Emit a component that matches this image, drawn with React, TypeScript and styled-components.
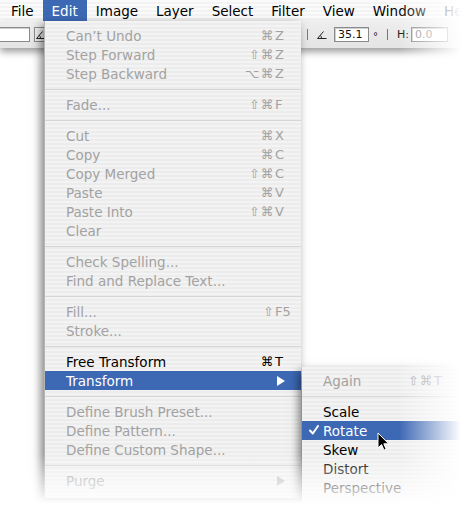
import styled, { createGlobalStyle } from "styled-components";

const GlobalStyle = createGlobalStyle`
  html, body {
    margin: 0;
    padding: 0;
    background: #fff;
  }
  body {
    font-family: "DejaVu Sans", "Liberation Sans", sans-serif;
  }
`;

type MenuItem =
  | "sep"
  | {
      label: string;
      mods?: string;
      keyName?: string;
      enabled?: boolean;
      submenu?: boolean;
      active?: boolean;
      checked?: boolean;
    };

const menuBarItems = ["File", "Edit", "Image", "Layer", "Select", "Filter", "View", "Window", "Help"];

const editItems: MenuItem[] = [
  { label: "Can’t Undo", mods: "⌘", keyName: "Z" },
  { label: "Step Forward", mods: "⇧⌘", keyName: "Z" },
  { label: "Step Backward", mods: "⌥⌘", keyName: "Z" },
  "sep",
  { label: "Fade...", mods: "⇧⌘", keyName: "F" },
  "sep",
  { label: "Cut", mods: "⌘", keyName: "X" },
  { label: "Copy", mods: "⌘", keyName: "C" },
  { label: "Copy Merged", mods: "⇧⌘", keyName: "C" },
  { label: "Paste", mods: "⌘", keyName: "V" },
  { label: "Paste Into", mods: "⇧⌘", keyName: "V" },
  { label: "Clear" },
  "sep",
  { label: "Check Spelling..." },
  { label: "Find and Replace Text..." },
  "sep",
  { label: "Fill...", mods: "⇧", keyName: "F5" },
  { label: "Stroke..." },
  "sep",
  { label: "Free Transform", mods: "⌘", keyName: "T", enabled: true },
  { label: "Transform", enabled: true, submenu: true, active: true },
  "sep",
  { label: "Define Brush Preset..." },
  { label: "Define Pattern..." },
  { label: "Define Custom Shape..." },
  "sep",
  { label: "Purge", submenu: true },
];

const transformItems: MenuItem[] = [
  { label: "Again", mods: "⇧⌘", keyName: "T" },
  "sep",
  { label: "Scale", enabled: true },
  { label: "Rotate", enabled: true, active: true, checked: true },
  { label: "Skew", enabled: true },
  { label: "Distort", enabled: true },
  { label: "Perspective", enabled: true },
];

const AngleIcon = () => (
  <svg width="10" height="8" viewBox="0 0 10 8">
    <path d="M0.5 7.5 H9.5 M0.5 7.5 L6.5 0.5 M4.5 7.5 A4 4 0 0 0 3.3 4.3" stroke="#222" strokeWidth="1" fill="none" />
  </svg>
);

const CheckIcon = () => (
  <svg width="10" height="10" viewBox="0 0 10 10">
    <path d="M1 5.5 L3.8 8.5 L9 1" stroke="#fff" strokeWidth="2" fill="none" strokeLinecap="round" strokeLinejoin="round" />
  </svg>
);

const Pointer = () => (
  <svg width="13" height="20" viewBox="0 0 13 20">
    <path d="M1 1 L1 16 L4.6 12.6 L7 18.2 L9.2 17.2 L6.8 11.8 L11.6 11.8 Z" fill="#000" stroke="#fff" strokeWidth="1" strokeLinejoin="round" />
  </svg>
);

const renderItems = (items: MenuItem[]) =>
  items.map((item, idx) =>
    item === "sep" ? (
      <Separator key={idx} />
    ) : (
      <Row key={idx} $enabled={!!item.enabled} $active={!!item.active}>
        {item.checked && (
          <Check>
            <CheckIcon />
          </Check>
        )}
        <Label>{item.label}</Label>
        {item.mods && <Mods>{item.mods}</Mods>}
        {item.keyName && <KeyName>{item.keyName}</KeyName>}
        {item.submenu && <Arrow $active={!!item.active} />}
      </Row>
    )
  );

const App = () => {
  return (
    <Screen>
      <GlobalStyle />
      <MenuBar>
        {menuBarItems.map((name) => (
          <BarItem key={name} $open={name === "Edit"}>
            {name}
          </BarItem>
        ))}
      </MenuBar>
      <Toolbar>
        <LeftGroup>
          <Field $width={38} $offset={-8} />
          <ToolButton>
            <AngleIcon />
          </ToolButton>
        </LeftGroup>
        <RightGroup>
          <Divider />
          <AngleIcon />
          <Field $width={35}>35.1</Field>
          <Degree>°</Degree>
          <Divider />
          <FieldLabel>H:</FieldLabel>
          <Field $width={37} $muted>
            0.0
          </Field>
        </RightGroup>
      </Toolbar>

      <EditMenu>{renderItems(editItems)}</EditMenu>
      <SubMenu>{renderItems(transformItems)}</SubMenu>
      <Cursor>
        <Pointer />
      </Cursor>

      <RightFade />
      <BottomFade />
    </Screen>
  );
};

export default App;

const Screen = styled.div`
  position: relative;
  width: 471px;
  height: 516px;
  overflow: hidden;
  background: #fff;
`;

const MenuBar = styled.div`
  display: flex;
  align-items: stretch;
  height: 21px;
  padding-left: 2px;
  background: repeating-linear-gradient(to bottom, #fbfbfb 0, #fbfbfb 2px, #f3f3f3 2px, #f3f3f3 4px);
`;

const BarItem = styled.div<{ $open: boolean }>`
  display: flex;
  align-items: center;
  padding: 0 9px 0 9px;
  font-size: 13.5px;
  color: ${({ $open }) => ($open ? "#fff" : "#000")};
  background: ${({ $open }) => ($open ? "#3d68b4" : "transparent")};
`;

const Toolbar = styled.div`
  display: flex;
  align-items: center;
  height: 27px;
  background: linear-gradient(to bottom, #eeeeee, #e4e4e4);
  box-shadow: 0 4px 7px rgba(0, 0, 0, 0.38);
  font-size: 11px;
  color: #222;
`;

const LeftGroup = styled.div`
  display: flex;
  align-items: center;
  gap: 4px;
`;

const RightGroup = styled.div`
  display: flex;
  align-items: center;
  gap: 7px;
  margin-left: 258px;
`;

const Field = styled.div<{ $width: number; $offset?: number; $muted?: boolean }>`
  box-sizing: border-box;
  width: ${({ $width }) => $width}px;
  height: 15px;
  margin-left: ${({ $offset }) => $offset ?? 0}px;
  padding: 0 3px;
  line-height: 13px;
  background: #fff;
  border: 1px solid #8a8a8a;
  box-shadow: inset 1px 1px 0 #cfcfcf;
  color: ${({ $muted }) => ($muted ? "#8a8a8a" : "#111")};
`;

const ToolButton = styled.div`
  box-sizing: border-box;
  display: flex;
  align-items: center;
  justify-content: center;
  width: 13px;
  height: 15px;
  border: 1px solid #8a8a8a;
  background: #f2f2f2;
`;

const Divider = styled.div`
  width: 1px;
  height: 11px;
  background: #777;
  margin: 0 2px;
`;

const Degree = styled.span`
  margin-left: -3px;
  font-size: 10px;
  line-height: 10px;
  align-self: flex-start;
  margin-top: 5px;
`;

const FieldLabel = styled.span`
  margin-right: -5px;
`;

const menuSurface = `
  position: absolute;
  display: flex;
  flex-direction: column;
  background: repeating-linear-gradient(to bottom, #f3f3f3 0, #f3f3f3 2px, #ececec 2px, #ececec 4px);
  box-shadow: -3px 4px 9px rgba(0, 0, 0, 0.5);
  font-size: 13.5px;
`;

const EditMenu = styled.div`
  ${menuSurface}
  left: 44px;
  top: 21px;
  width: 257px;
  padding: 5px 0 8px;
  z-index: 2;
  border-left: 1px solid #b5b5b5;
  box-sizing: border-box;
`;

const SubMenu = styled.div`
  ${menuSurface}
  left: 302px;
  top: 367px;
  width: 158px;
  padding: 4px 0 8px;
  z-index: 3;
`;

const Row = styled.div<{ $enabled: boolean; $active: boolean }>`
  position: relative;
  display: flex;
  align-items: center;
  height: 19px;
  padding: 0 14px 0 21px;
  white-space: nowrap;
  color: ${({ $enabled, $active }) => ($active ? "#fff" : $enabled ? "#000" : "#a2a2a2")};
  background: ${({ $active }) => ($active ? "#3d68b4" : "transparent")};
`;

const Label = styled.span`
  flex: 1;
`;

const Mods = styled.span`
  font-size: 12.5px;
  letter-spacing: 1.5px;
`;

const KeyName = styled.span`
  width: 12px;
  font-size: 13px;
  overflow: visible;
`;

const Arrow = styled.span<{ $active: boolean }>`
  width: 0;
  height: 0;
  margin-right: 2px;
  border-top: 5px solid transparent;
  border-bottom: 5px solid transparent;
  border-left: 8px solid ${({ $active }) => ($active ? "#fff" : "#b8b8b8")};
`;

const Check = styled.span`
  position: absolute;
  left: 7px;
  top: 4px;
  display: flex;
`;

const Separator = styled.div`
  height: 1px;
  margin: 6px 0 5px;
  background: #d6d6d6;
`;

const Cursor = styled.div`
  position: absolute;
  left: 377px;
  top: 432px;
  z-index: 4;
  display: flex;
`;

const RightFade = styled.div`
  position: absolute;
  top: 0;
  right: 0;
  width: 72px;
  height: 100%;
  z-index: 5;
  background: linear-gradient(to right, rgba(255, 255, 255, 0), #fff 86%);
`;

const BottomFade = styled.div`
  position: absolute;
  left: 0;
  bottom: 0;
  width: 100%;
  height: 62px;
  z-index: 5;
  background: linear-gradient(to bottom, rgba(255, 255, 255, 0), #fff 82%);
`;
